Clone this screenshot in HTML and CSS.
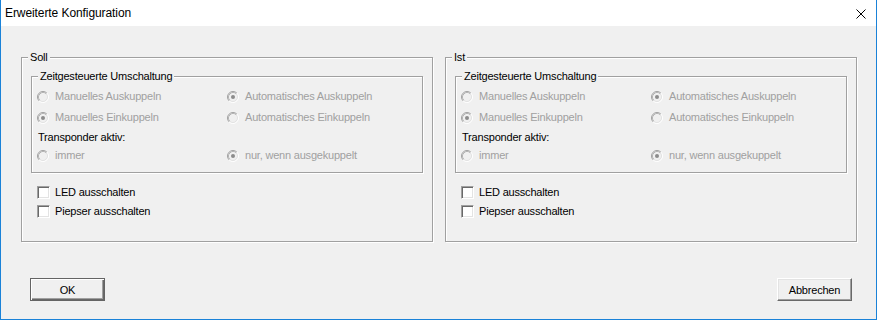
FILE: index.html
```html
<!DOCTYPE html>
<html lang="de">
<head>
<meta charset="utf-8">
<title>Erweiterte Konfiguration</title>
<link rel="stylesheet" href="styles.css">
</head>
<body>
<div class="window">
  <div class="titlebar">
    <span class="title">Erweiterte Konfiguration</span>
    <svg class="close" width="10" height="10" viewBox="0 0 10 10"><path d="M0.5 0.5L9.5 9.5M9.5 0.5L0.5 9.5" stroke="#000" stroke-width="1" fill="none"/></svg>
  </div>
  <div class="content">
    <div class="groups">
      <section class="group">
        <span class="legend">Soll</span>
        <div class="subgroup">
          <span class="legend">Zeitgesteuerte Umschaltung</span>
          <div class="grid">
            <label class="opt"><svg class="radio" width="12" height="12" viewBox="0 0 12 12"><circle cx="6" cy="6" r="5" fill="#f0f0f0"/><path d="M2.11 9.89A5.5 5.5 0 0 1 9.89 2.11" stroke="#a0a0a0" fill="none"/><path d="M9.89 2.11A5.5 5.5 0 0 1 2.11 9.89" stroke="#fff" fill="none"/><path d="M2.82 9.18A4.5 4.5 0 0 1 9.18 2.82" stroke="#b4b4b4" fill="none"/><path d="M9.18 2.82A4.5 4.5 0 0 1 2.82 9.18" stroke="#e3e3e3" fill="none"/></svg><span class="dis">Manuelles Auskuppeln</span></label>
            <label class="opt"><svg class="radio" width="12" height="12" viewBox="0 0 12 12"><circle cx="6" cy="6" r="5" fill="#f0f0f0"/><path d="M2.11 9.89A5.5 5.5 0 0 1 9.89 2.11" stroke="#a0a0a0" fill="none"/><path d="M9.89 2.11A5.5 5.5 0 0 1 2.11 9.89" stroke="#fff" fill="none"/><path d="M2.82 9.18A4.5 4.5 0 0 1 9.18 2.82" stroke="#b4b4b4" fill="none"/><path d="M9.18 2.82A4.5 4.5 0 0 1 2.82 9.18" stroke="#e3e3e3" fill="none"/><circle cx="6" cy="6" r="2" fill="#8c8c8c"/></svg><span class="dis">Automatisches Auskuppeln</span></label>
            <label class="opt"><svg class="radio" width="12" height="12" viewBox="0 0 12 12"><circle cx="6" cy="6" r="5" fill="#f0f0f0"/><path d="M2.11 9.89A5.5 5.5 0 0 1 9.89 2.11" stroke="#a0a0a0" fill="none"/><path d="M9.89 2.11A5.5 5.5 0 0 1 2.11 9.89" stroke="#fff" fill="none"/><path d="M2.82 9.18A4.5 4.5 0 0 1 9.18 2.82" stroke="#b4b4b4" fill="none"/><path d="M9.18 2.82A4.5 4.5 0 0 1 2.82 9.18" stroke="#e3e3e3" fill="none"/><circle cx="6" cy="6" r="2" fill="#8c8c8c"/></svg><span class="dis">Manuelles Einkuppeln</span></label>
            <label class="opt"><svg class="radio" width="12" height="12" viewBox="0 0 12 12"><circle cx="6" cy="6" r="5" fill="#f0f0f0"/><path d="M2.11 9.89A5.5 5.5 0 0 1 9.89 2.11" stroke="#a0a0a0" fill="none"/><path d="M9.89 2.11A5.5 5.5 0 0 1 2.11 9.89" stroke="#fff" fill="none"/><path d="M2.82 9.18A4.5 4.5 0 0 1 9.18 2.82" stroke="#b4b4b4" fill="none"/><path d="M9.18 2.82A4.5 4.5 0 0 1 2.82 9.18" stroke="#e3e3e3" fill="none"/></svg><span class="dis">Automatisches Einkuppeln</span></label>
            <div class="caption">Transponder aktiv:</div>
            <label class="opt"><svg class="radio" width="12" height="12" viewBox="0 0 12 12"><circle cx="6" cy="6" r="5" fill="#f0f0f0"/><path d="M2.11 9.89A5.5 5.5 0 0 1 9.89 2.11" stroke="#a0a0a0" fill="none"/><path d="M9.89 2.11A5.5 5.5 0 0 1 2.11 9.89" stroke="#fff" fill="none"/><path d="M2.82 9.18A4.5 4.5 0 0 1 9.18 2.82" stroke="#b4b4b4" fill="none"/><path d="M9.18 2.82A4.5 4.5 0 0 1 2.82 9.18" stroke="#e3e3e3" fill="none"/></svg><span class="dis">immer</span></label>
            <label class="opt"><svg class="radio" width="12" height="12" viewBox="0 0 12 12"><circle cx="6" cy="6" r="5" fill="#f0f0f0"/><path d="M2.11 9.89A5.5 5.5 0 0 1 9.89 2.11" stroke="#a0a0a0" fill="none"/><path d="M9.89 2.11A5.5 5.5 0 0 1 2.11 9.89" stroke="#fff" fill="none"/><path d="M2.82 9.18A4.5 4.5 0 0 1 9.18 2.82" stroke="#b4b4b4" fill="none"/><path d="M9.18 2.82A4.5 4.5 0 0 1 2.82 9.18" stroke="#e3e3e3" fill="none"/><circle cx="6" cy="6" r="2" fill="#8c8c8c"/></svg><span class="dis">nur, wenn ausgekuppelt</span></label>
          </div>
        </div>
        <div class="checks">
          <label class="chk"><span class="box"></span>LED ausschalten</label>
          <label class="chk"><span class="box"></span>Piepser ausschalten</label>
        </div>
      </section>
      <section class="group">
        <span class="legend">Ist</span>
        <div class="subgroup">
          <span class="legend">Zeitgesteuerte Umschaltung</span>
          <div class="grid">
            <label class="opt"><svg class="radio" width="12" height="12" viewBox="0 0 12 12"><circle cx="6" cy="6" r="5" fill="#f0f0f0"/><path d="M2.11 9.89A5.5 5.5 0 0 1 9.89 2.11" stroke="#a0a0a0" fill="none"/><path d="M9.89 2.11A5.5 5.5 0 0 1 2.11 9.89" stroke="#fff" fill="none"/><path d="M2.82 9.18A4.5 4.5 0 0 1 9.18 2.82" stroke="#b4b4b4" fill="none"/><path d="M9.18 2.82A4.5 4.5 0 0 1 2.82 9.18" stroke="#e3e3e3" fill="none"/></svg><span class="dis">Manuelles Auskuppeln</span></label>
            <label class="opt"><svg class="radio" width="12" height="12" viewBox="0 0 12 12"><circle cx="6" cy="6" r="5" fill="#f0f0f0"/><path d="M2.11 9.89A5.5 5.5 0 0 1 9.89 2.11" stroke="#a0a0a0" fill="none"/><path d="M9.89 2.11A5.5 5.5 0 0 1 2.11 9.89" stroke="#fff" fill="none"/><path d="M2.82 9.18A4.5 4.5 0 0 1 9.18 2.82" stroke="#b4b4b4" fill="none"/><path d="M9.18 2.82A4.5 4.5 0 0 1 2.82 9.18" stroke="#e3e3e3" fill="none"/><circle cx="6" cy="6" r="2" fill="#8c8c8c"/></svg><span class="dis">Automatisches Auskuppeln</span></label>
            <label class="opt"><svg class="radio" width="12" height="12" viewBox="0 0 12 12"><circle cx="6" cy="6" r="5" fill="#f0f0f0"/><path d="M2.11 9.89A5.5 5.5 0 0 1 9.89 2.11" stroke="#a0a0a0" fill="none"/><path d="M9.89 2.11A5.5 5.5 0 0 1 2.11 9.89" stroke="#fff" fill="none"/><path d="M2.82 9.18A4.5 4.5 0 0 1 9.18 2.82" stroke="#b4b4b4" fill="none"/><path d="M9.18 2.82A4.5 4.5 0 0 1 2.82 9.18" stroke="#e3e3e3" fill="none"/><circle cx="6" cy="6" r="2" fill="#8c8c8c"/></svg><span class="dis">Manuelles Einkuppeln</span></label>
            <label class="opt"><svg class="radio" width="12" height="12" viewBox="0 0 12 12"><circle cx="6" cy="6" r="5" fill="#f0f0f0"/><path d="M2.11 9.89A5.5 5.5 0 0 1 9.89 2.11" stroke="#a0a0a0" fill="none"/><path d="M9.89 2.11A5.5 5.5 0 0 1 2.11 9.89" stroke="#fff" fill="none"/><path d="M2.82 9.18A4.5 4.5 0 0 1 9.18 2.82" stroke="#b4b4b4" fill="none"/><path d="M9.18 2.82A4.5 4.5 0 0 1 2.82 9.18" stroke="#e3e3e3" fill="none"/></svg><span class="dis">Automatisches Einkuppeln</span></label>
            <div class="caption">Transponder aktiv:</div>
            <label class="opt"><svg class="radio" width="12" height="12" viewBox="0 0 12 12"><circle cx="6" cy="6" r="5" fill="#f0f0f0"/><path d="M2.11 9.89A5.5 5.5 0 0 1 9.89 2.11" stroke="#a0a0a0" fill="none"/><path d="M9.89 2.11A5.5 5.5 0 0 1 2.11 9.89" stroke="#fff" fill="none"/><path d="M2.82 9.18A4.5 4.5 0 0 1 9.18 2.82" stroke="#b4b4b4" fill="none"/><path d="M9.18 2.82A4.5 4.5 0 0 1 2.82 9.18" stroke="#e3e3e3" fill="none"/></svg><span class="dis">immer</span></label>
            <label class="opt"><svg class="radio" width="12" height="12" viewBox="0 0 12 12"><circle cx="6" cy="6" r="5" fill="#f0f0f0"/><path d="M2.11 9.89A5.5 5.5 0 0 1 9.89 2.11" stroke="#a0a0a0" fill="none"/><path d="M9.89 2.11A5.5 5.5 0 0 1 2.11 9.89" stroke="#fff" fill="none"/><path d="M2.82 9.18A4.5 4.5 0 0 1 9.18 2.82" stroke="#b4b4b4" fill="none"/><path d="M9.18 2.82A4.5 4.5 0 0 1 2.82 9.18" stroke="#e3e3e3" fill="none"/><circle cx="6" cy="6" r="2" fill="#8c8c8c"/></svg><span class="dis">nur, wenn ausgekuppelt</span></label>
          </div>
        </div>
        <div class="checks">
          <label class="chk"><span class="box"></span>LED ausschalten</label>
          <label class="chk"><span class="box"></span>Piepser ausschalten</label>
        </div>
      </section>
    </div>
    <div class="buttons">
      <button class="btn default">OK</button>
      <button class="btn">Abbrechen</button>
    </div>
  </div>
</div>
</body>
</html>
```
FILE: styles.css
```css
html, body {
  margin: 0;
  padding: 0;
  background: #f0f0f0;
}

body {
  font-family: "Liberation Sans", Arial, sans-serif;
  font-size: 11px;
  letter-spacing: -0.2px;
  color: #000;
}

.window {
  width: 877px;
  height: 320px;
  box-sizing: border-box;
  border: 1px solid #1a82d8;
  border-top: none;
  background: #f0f0f0;
  display: flex;
  flex-direction: column;
}

.titlebar {
  height: 26px;
  flex: none;
  background: #fff;
  display: flex;
  align-items: center;
  justify-content: space-between;
  padding: 0 10px 0 4px;
}

.title {
  font-size: 12px;
  letter-spacing: -0.08px;
  line-height: 26px;
}

.close {
  display: block;
  margin-top: 1px;
}

.content {
  flex: 1;
  display: flex;
  flex-direction: column;
  padding: 31px 19px 18px 20px;
}

.groups {
  display: flex;
  gap: 12px;
}

.group {
  position: relative;
  box-sizing: border-box;
  width: 412px;
  height: 185px;
  border: 1px solid #a0a0a0;
  box-shadow: inset 1px 1px 0 #fff, 1px 1px 0 #fff;
  padding: 18px 9px 0 9px;
}

.legend {
  position: absolute;
  top: -7px;
  left: 6px;
  padding: 0 2px;
  background: #f0f0f0;
  line-height: 13px;
  white-space: nowrap;
}

.subgroup {
  position: relative;
  border: 1px solid #a0a0a0;
  box-shadow: inset 1px 1px 0 #fff, 1px 1px 0 #fff;
  padding: 9px 0 7px 5px;
}

.grid {
  display: grid;
  grid-template-columns: 190px 1fr;
  grid-template-rows: 21px 21px 18px 19px;
}

.opt {
  display: flex;
  align-items: center;
  line-height: 13px;
  white-space: nowrap;
}

.radio {
  display: block;
  flex: none;
  margin-right: 6px;
}

.dis {
  color: #a0a0a0;
}

.caption {
  grid-column: 1 / -1;
  display: flex;
  align-items: center;
  padding-left: 1px;
  line-height: 13px;
}

.checks {
  margin-top: 10px;
  padding-left: 6px;
  display: flex;
  flex-direction: column;
}

.chk {
  height: 19px;
  display: flex;
  align-items: center;
  line-height: 13px;
  white-space: nowrap;
}

.box {
  width: 13px;
  height: 13px;
  box-sizing: border-box;
  flex: none;
  border: 1px solid;
  border-color: #a0a0a0 #fff #fff #a0a0a0;
  box-shadow: inset 1px 1px 0 #696969, inset -1px -1px 0 #e3e3e3;
  background: #fff;
  margin-right: 5px;
}

.buttons {
  margin-top: 36px;
  display: flex;
  justify-content: space-between;
  padding: 0 5px 0 9px;
}

.btn {
  width: 75px;
  height: 23px;
  box-sizing: border-box;
  padding: 0;
  margin: 0;
  font-family: "Liberation Sans", Arial, sans-serif;
  font-size: 11px;
  letter-spacing: -0.2px;
  color: #000;
  background: #f0f0f0;
  border: 1px solid;
  border-color: #fff #696969 #696969 #fff;
  box-shadow: inset -1px -1px 0 #a0a0a0, inset 1px 1px 0 #e3e3e3;
}

.btn.default {
  border-color: #646464;
  box-shadow: inset 1px 1px 0 #fff, inset -1px -1px 0 #696969, inset -2px -2px 0 #a0a0a0;
}
```
